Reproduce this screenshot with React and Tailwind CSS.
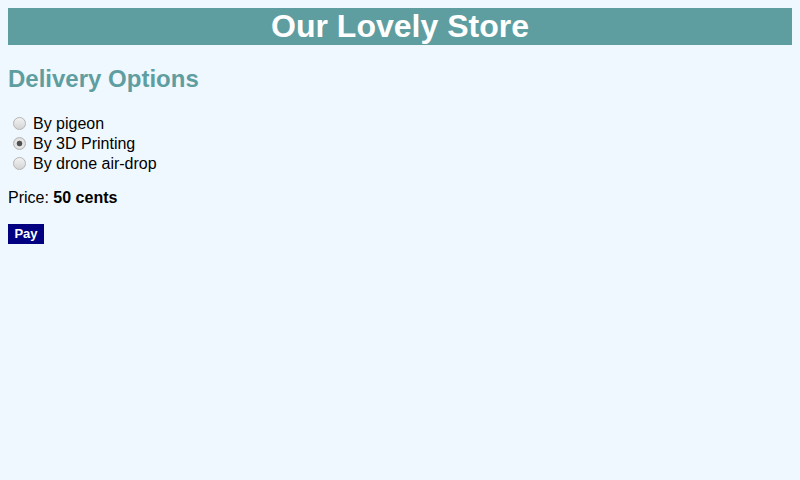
export default function App() {
  return (
    <div className="min-h-[480px] bg-[#f0f8ff] p-2 text-black" style={{ fontFamily: '"Liberation Sans", Arial, sans-serif' }}>
      <h1 className="bg-[#5f9ea0] text-center text-[32px] font-bold leading-[37px] text-white">Our Lovely Store</h1>
      <h2 className="mt-5 mb-5 text-[24px] font-bold leading-[28px] text-[#5f9ea0]">Delivery Options</h2>
      <div className="mt-[2px] text-[16px]">
        {["By pigeon", "By 3D Printing", "By drone air-drop"].map((t, i) => (
          <label key={t} className="flex h-5 items-center">
            <input
              type="radio"
              name="d"
              defaultChecked={i === 1}
              className="ml-[5px] mr-[7px] h-[13px] w-[13px] shrink-0 appearance-none rounded-full border border-[#b4b4b4] bg-[linear-gradient(#f2f2f2,#d4d4d4)] checked:bg-[radial-gradient(circle,#505050_0,#505050_2.5px,#e8e8e8_3.2px,#d4d4d4_100%)]"
            />
            <span className="pt-[2px] leading-5">{t}</span>
          </label>
        ))}
      </div>
      <p className="mt-[15px] pt-[1px] text-[16px] leading-[18px]">
        Price: <b>50 cents</b>
      </p>
      <button className="mt-[17px] flex h-5 w-9 items-center justify-center bg-[#000080] text-[13px] font-bold text-white">Pay</button>
    </div>
  );
}
